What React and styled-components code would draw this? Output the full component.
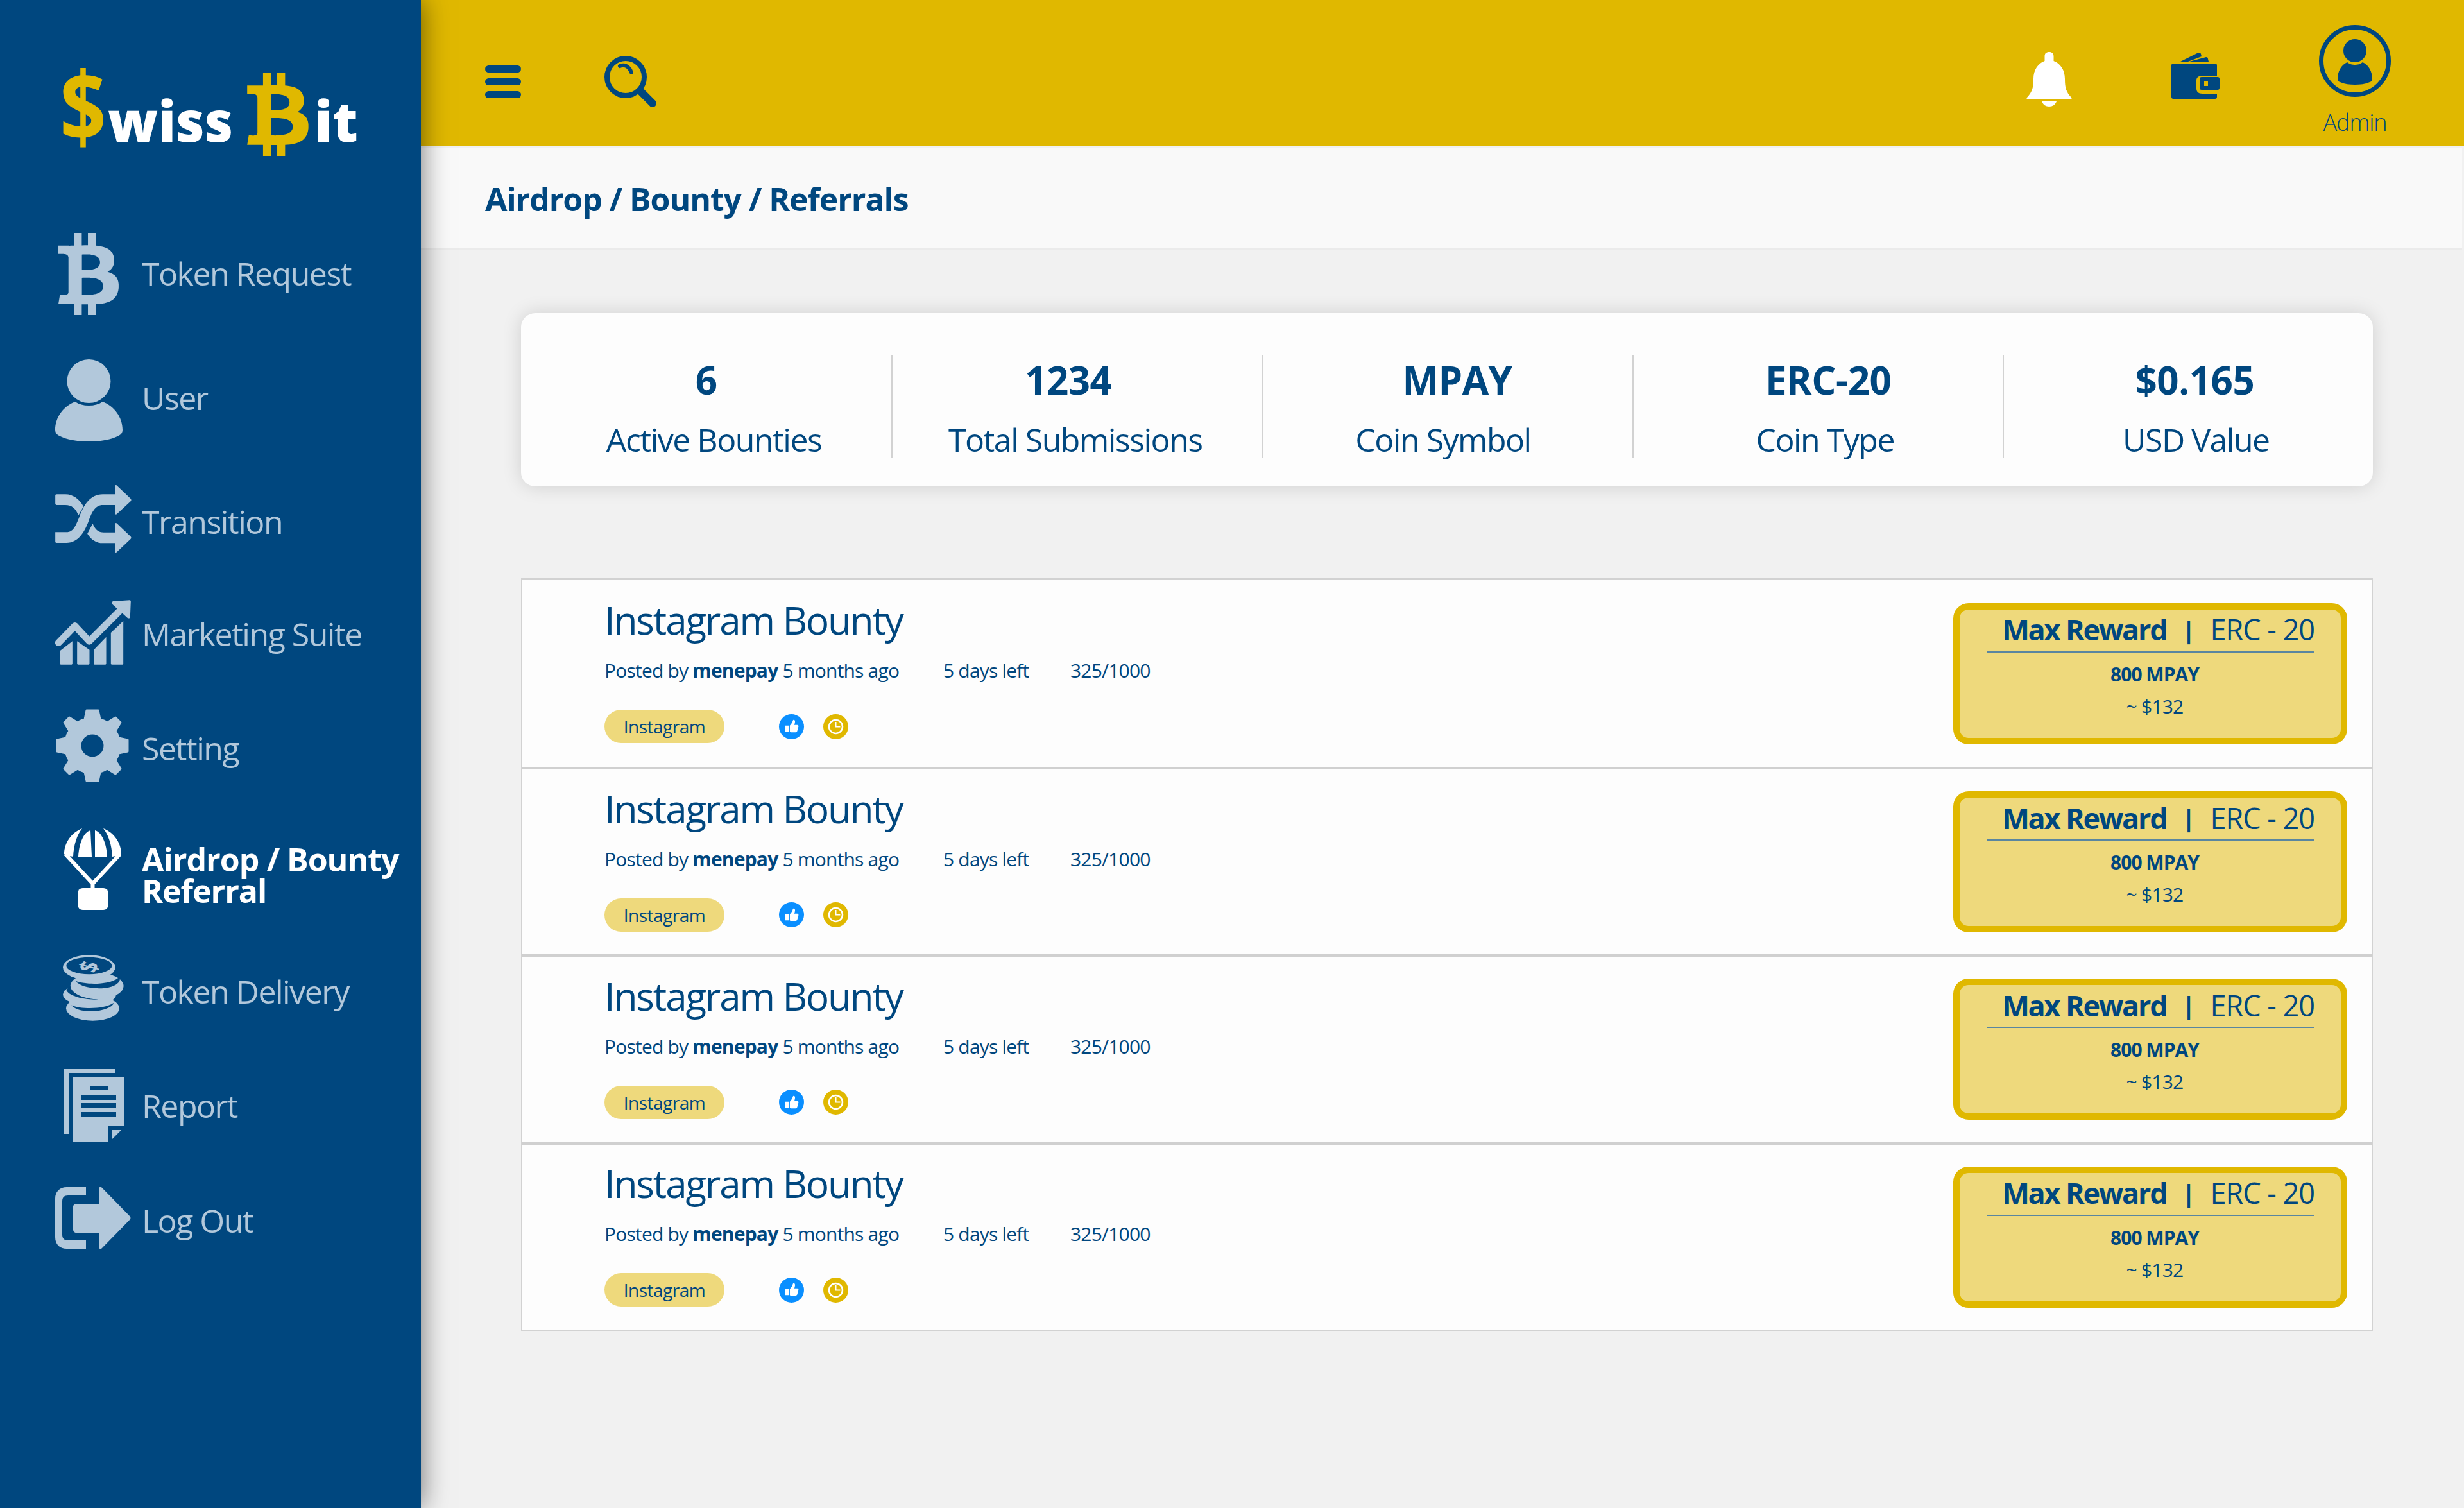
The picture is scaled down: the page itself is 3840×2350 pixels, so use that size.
import React from "react";
import styled, { createGlobalStyle } from "styled-components";
import { FaBtc } from "react-icons/fa";

const NAVY = "#00477f";
const GOLD = "#e0b800";
const PALE_GOLD = "#eed97c";
const MUTED = "#b2c8db";

const STATS = [
    { value: "6", label: "Active Bounties", valueShift: 0, labelShift: 24 },
    { value: "1234", label: "Total Submissions", valueShift: -28, labelShift: -6 },
    { value: "MPAY", label: "Coin Symbol", valueShift: 30, labelShift: -14 },
    { value: "ERC-20", label: "Coin Type", valueShift: 32, labelShift: 22 },
    { value: "$0.165", label: "USD Value", valueShift: 20, labelShift: 24 },
];

const BitcoinIcon = () => <FaBtc size={128} />;

const UserIcon = () => (
    <svg width="105" height="128" viewBox="0 0 105 128" fill="currentColor">
        <circle cx="52.5" cy="34" r="34" />
        <path d="M31 66c6 4 13 6 21.500 6S68 70 74 66c18 7 31 24 31 44 0 4-2 7-6 9-11 6-28 9-46.500 9S17 125 6 119c-4-2-6-5-6-9 0-20 13-37 31-44z" />
    </svg>
);

const ShuffleIcon = () => (
    <svg width="119" height="106" viewBox="78 55 356 318" fill="currentColor">
        <path d="M78 275H130C165 275 175 240 190 205C210 150 240 98 300 98H358V60C358 55 362 53 366 57L430 118C434 122 434 127 430 131L366 190C362 194 358 192 358 187V148H300C265 148 250 180 235 220C215 275 185 325 130 325H85C80 325 78 322 78 318Z" />
        <path d="M85 98H125C160 98 190 120 210 155L186 197C175 165 155 148 125 148H85C80 148 78 145 78 140V105C78 100 80 98 85 98Z" />
        <path d="M228 282L253 235C265 265 280 276 305 276H358V238C358 232 362 230 366 234L430 295C434 299 434 303 430 307L366 368C362 372 358 370 358 364V326H300C270 326 245 310 228 282Z" />
    </svg>
);

const ChartIcon = () => (
    <svg width="118" height="101" viewBox="78 582 353 303" fill="currentColor">
        <path d="M93 782L170 703L237 775L385 627" fill="none" stroke="currentColor" strokeWidth="32" strokeLinecap="round" strokeLinejoin="round" />
        <path d="M348 588L425 583C429 583 431 585 431 589L428 660C428 668 420 670 415 665L345 602C340 596 342 590 348 588Z" />
        <path d="M100 820L158 775V878C158 882 156 884 152 884H106C102 884 100 882 100 878Z" />
        <path d="M180 775L238 815V878C238 882 236 884 232 884H186C182 884 180 882 180 878Z" />
        <path d="M258 815L316 755V878C316 882 314 884 310 884H264C260 884 258 882 258 878Z" />
        <path d="M338 735L396 680V878C396 882 394 884 390 884H344C340 884 338 882 338 878Z" />
    </svg>
);

const GearIcon = () => (
    <svg width="114" height="114" viewBox="0 0 114 114" fill="currentColor">
        <path
            fillRule="evenodd"
            stroke="currentColor"
            strokeWidth="3"
            strokeLinejoin="round"
            d="M48 2h18l3 14c4 1 8 3 11 5l13-8 8 8-8 13c2 3 4 7 5 11l14 3v18l-14 3c-1 4-3 8-5 11l8 13-8 8-13-8c-3 2-7 4-11 5l-3 14H48l-3-14c-4-1-8-3-11-5l-13 8-8-8 8-13c-2-3-4-7-5-11L2 66V48l14-3c1-4 3-8 5-11l-8-13 8-8 13 8c3-2 7-4 11-5zM57 38a19 19 0 1 0 0 38 19 19 0 0 0 0-38z"
        />
    </svg>
);

const ParachuteIcon = () => (
    <svg width="89" height="127" viewBox="0 0 89 127" fill="currentColor">
        <path d="M0 40C0 22 12 6 28 0C20 10 15 25 14 44L2 42Z" />
        <path d="M41 3C30 6 23 24 22 44H43Z" />
        <path d="M48 3C59 6 66 24 67 44H48Z" />
        <path d="M61 0C77 6 89 22 89 40L87 42L75 44C74 25 69 10 61 0Z" />
        <path d="M2 40L44.500 86L87 40M44.500 86V94" fill="none" stroke="currentColor" strokeWidth="6" />
        <rect x="21" y="93" width="48" height="34" rx="8" />
    </svg>
);

const CoinsIcon = () => (
    <svg width="95" height="103" viewBox="55 30 286 308" fill="currentColor">
        <ellipse cx="195" cy="280" rx="125" ry="58" />
        <ellipse cx="180" cy="215" rx="125" ry="52" />
        <ellipse cx="215" cy="175" rx="125" ry="62" />
        <ellipse cx="178" cy="88" rx="123" ry="58" />
        <ellipse cx="178" cy="80" rx="107" ry="40" fill={NAVY} />
        <path d="M115 152C170 172 280 170 320 133C332 155 300 186 225 186C170 186 130 172 115 152Z" fill={NAVY} />
        <path d="M90 175C95 215 160 236 222 238C160 242 90 225 72 197C74 188 80 180 90 175Z" fill={NAVY} />
        <path d="M95 265C140 285 250 285 292 255C296 268 250 294 190 294C140 294 105 280 95 265Z" fill={NAVY} />
        <text
            transform="translate(178 85) scale(1 .7) rotate(-70)"
            y="42"
            fontSize="120"
            fontWeight="700"
            textAnchor="middle"
            fontFamily="Open Sans, sans-serif"
        >$</text>
    </svg>
);

const ReportIcon = () => (
    <svg width="94" height="113" viewBox="0 0 94 113" fill="currentColor">
        <path d="M0 0h80v6H7v95H0z" />
        <path fillRule="evenodd" d="M13 13h81v76H69v24H13zM40 26v7h28v-7zM27 40v8h54v-8zM27 53v8h54v-8zM27 67v7h54v-7z" />
        <path d="M75 95h14L75 109z" />
    </svg>
);

const LogoutIcon = () => (
    <svg width="118" height="96" viewBox="0 0 118 96" fill="currentColor">
        <path d="M48 0v13H20C14 13 11 16 11 22v52c0 6 3 9 9 9h28v13H18C7 96 0 89 0 78V18C0 7 7 0 18 0z" />
        <path d="M68 2c0-2 3-3 5-1l43 44c2 2 2 4 0 6L73 95c-2 2-5 1-5-1V71H33c-3 0-5-2-5-5V31c0-3 2-5 5-5h35z" />
    </svg>
);

const MenuIcon = () => (
    <svg width="56" height="51" viewBox="0 0 56 51" fill={NAVY}>
        <rect width="56" height="11" rx="5.500" />
        <rect y="20" width="56" height="11" rx="5.500" />
        <rect y="40" width="56" height="11" rx="5.500" />
    </svg>
);

const SearchIcon = () => (
    <svg width="81" height="80" viewBox="0 0 81 80" fill="none" stroke={NAVY}>
        <circle cx="33" cy="33" r="29" strokeWidth="8" />
        <path d="M24 16c6-3 14-1 18 10" strokeWidth="6" strokeLinecap="round" />
        <path d="M56 55l19 19" strokeWidth="12" strokeLinecap="round" />
    </svg>
);

const BellIcon = () => (
    <svg width="71" height="85" viewBox="0 0 71 85" fill="#fff">
        <path d="M28.500 7C28.500 2 31 0 35.500 0S42.500 2 42.500 7V14C53 18 60 28 60 42C60 56 62 62 70 71L71 74H0L1 71C9 62 11 56 11 42C11 28 18 18 28.500 14Z" />
        <path d="M24 77H47C45 82 41 85 35.500 85S26 82 24 77Z" />
    </svg>
);

const WalletIcon = () => (
    <svg width="75" height="72" viewBox="0 0 75 72" fill={NAVY}>
        <path d="M14 14L42 0c2-1 3 0 4 2l1 4L26 14zM28 14l26-7c2 0 3 1 3 3l1 4z" />
        <path d="M3 17h65c2 0 3 1 3 3v16H48c-6 0-9 3-9 7v13c0 5 3 8 9 8h23v5c0 2-1 3-3 3H3c-2 0-3-1-3-3V20c0-2 1-3 3-3z" />
        <path fillRule="evenodd" d="M47 38h25c2 0 3 1 3 3v14c0 2-1 3-3 3H47c-2 0-3-1-3-3V41c0-2 1-3 3-3zM51 45v7h6v-7z" />
    </svg>
);

const AvatarIcon = () => (
    <svg width="112" height="112" viewBox="0 0 112 112" fill={NAVY}>
        <circle cx="56" cy="56" r="52.500" fill="none" stroke={NAVY} strokeWidth="7" />
        <ellipse cx="56" cy="40" rx="18" ry="18" />
        <path d="M44 58c4 3 8 4 12 4s8-1 12-4c9 4 15 14 15 26 0 3-1 4-4 5-7 3-15 4-23 4s-16-1-23-4c-3-1-4-2-4-5 0-12 6-22 15-26z" />
    </svg>
);

const ThumbIcon = () => (
    <svg width="22" height="22" viewBox="0 0 25 25" fill="#fff">
        <path d="M1 11h6v11H1zM3 18.500h2v1.500H3z" />
        <path d="M9 11l4-5c1-2 1-4 2-5 2-1 4 1 3 5l-1 4h5c2 0 3 2 2 4l-2 7c-1 1-2 2-3 2H11c-1 0-2-1-2-1z" />
    </svg>
);

const ClockIcon = () => (
    <svg width="31" height="31" viewBox="0 0 31 31" fill="none" stroke="#fff">
        <circle cx="15.500" cy="15.500" r="10.500" strokeWidth="2.500" />
        <path d="M15.500 8v7.500h7" strokeWidth="2" />
    </svg>
);

const NAV = [
    { label: "Token Request", icon: <BitcoinIcon />, x: -12, dy: 1, gap: 0 },
    { label: "User", icon: <UserIcon />, x: 0, dy: 4, gap: 74 },
    { label: "Transition", icon: <ShuffleIcon />, x: 0, dy: -4, gap: 73 },
    { label: "Marketing Suite", icon: <ChartIcon />, x: 0, dy: -3, gap: 55 },
    { label: "Setting", icon: <GearIcon />, x: 1, dy: -4, gap: 58 },
    { label: "Airdrop / Bounty Referral", icon: <ParachuteIcon />, x: 14, dy: -10, gap: 78, active: true },
    { label: "Token Delivery", icon: <CoinsIcon />, x: 12, dy: -6, gap: 61 },
    { label: "Report", icon: <ReportIcon />, x: 14, dy: -1, gap: 58 },
    { label: "Log Out", icon: <LogoutIcon />, x: 0, dy: -4, gap: 59 },
];

const Bounty = () => (
    <BountyRow>
        <BountyInfo>
            <BountyTitle>Instagram Bounty</BountyTitle>
            <MetaLine>
                <PostedBy>Posted by <strong>menepay</strong> 5 months ago</PostedBy>
                <DaysLeft>5 days left</DaysLeft>
                <span>325/1000</span>
            </MetaLine>
            <TagLine>
                <Tag>Instagram</Tag>
                <RoundBadge $color="#0a8fff" $first><ThumbIcon /></RoundBadge>
                <RoundBadge $color={GOLD}><ClockIcon /></RoundBadge>
            </TagLine>
        </BountyInfo>
        <RewardBox>
            <RewardHead>
                <strong>Max Reward</strong>
                <RewardBar>|</RewardBar>
                <span>ERC - 20</span>
            </RewardHead>
            <RewardAmount>800 MPAY</RewardAmount>
            <RewardUsd>~ $132</RewardUsd>
        </RewardBox>
    </BountyRow>
);

const App = () => {
    return (
        <Page>
            <GlobalStyle />
            <Sidebar>
                <Logo>
                    <Dollar>$</Dollar>wiss
                    <LogoCoin><FaBtc size={130} /></LogoCoin>it
                </Logo>
                <NavList>
                    {NAV.map((item) => (
                        <NavItem key={item.label} $gap={item.gap} $active={item.active}>
                            <NavIcon $x={item.x} $dy={item.dy}>{item.icon}</NavIcon>
                            <NavLabel $active={item.active}>{item.label}</NavLabel>
                        </NavItem>
                    ))}
                </NavList>
            </Sidebar>
            <Main>
                <TopBar>
                    <TopLeft>
                        <MenuIcon />
                        <SearchIcon />
                    </TopLeft>
                    <TopRight>
                        <TopIcon $dy={18}><BellIcon /></TopIcon>
                        <TopIcon $dy={8}><WalletIcon /></TopIcon>
                        <Profile>
                            <AvatarIcon />
                            <ProfileName>Admin</ProfileName>
                        </Profile>
                    </TopRight>
                </TopBar>
                <Crumbs>Airdrop / Bounty / Referrals</Crumbs>
                <Content>
                    <StatsCard>
                        {STATS.map((stat) => (
                            <Stat key={stat.label}>
                                <StatValue $shift={stat.valueShift}>{stat.value}</StatValue>
                                <StatLabel $shift={stat.labelShift}>{stat.label}</StatLabel>
                            </Stat>
                        ))}
                    </StatsCard>
                    <BountyList>
                        <Bounty />
                        <Bounty />
                        <Bounty />
                        <Bounty />
                    </BountyList>
                </Content>
            </Main>
        </Page>
    );
};

export default App;


const GlobalStyle = createGlobalStyle`
body {
    margin: 0;
    background: #f1f1f1;
    font-family: "Open Sans", "Noto Sans", sans-serif;
    color: ${NAVY};
}
`

const Page = styled.div`
display: flex;
width: 3840px;
height: 2350px;
overflow: hidden;
`

const Sidebar = styled.aside`
flex: 0 0 656px;
position: relative;
z-index: 2;
background: ${NAVY};
box-shadow: 0 0 40px rgba(0, 0, 0, 0.55);
`

const Logo = styled.div`
display: flex;
align-items: baseline;
height: 366px;
padding: 98px 0 0 93px;
box-sizing: border-box;
color: #fff;
font-size: 86px;
font-weight: 800;
line-height: 130px;
`

const Dollar = styled.span`
color: ${GOLD};
font-size: 150px;
font-weight: 700;
display: inline-block;
width: 75px;
transform: scaleX(0.85);
transform-origin: left center;
`

const LogoCoin = styled.span`
color: ${GOLD};
align-self: flex-start;
margin: 15px -8px 0 5px;
height: 130px;
`

const NavList = styled.nav`
display: flex;
flex-direction: column;
`

const NavItem = styled.a`
display: flex;
align-items: center;
height: 120px;
margin-top: ${(p) => p.$gap}px;
padding-left: 86px;
color: ${(p) => (p.$active ? "#fff" : MUTED)};
`

const NavIcon = styled.div`
display: flex;
align-items: center;
flex: 0 0 135px;
padding-left: ${(p) => Math.max(p.$x, 0)}px;
margin-left: ${(p) => Math.min(p.$x, 0)}px;
margin-right: ${(p) => -Math.min(p.$x, 0)}px;
box-sizing: border-box;
margin-top: ${(p) => p.$dy * 2}px;
`

const NavLabel = styled.span`
font-size: 50px;
font-weight: ${(p) => (p.$active ? 700 : 400)};
line-height: ${(p) => (p.$active ? "49px" : "60px")};
letter-spacing: ${(p) => (p.$active ? "-1px" : "-1.5px")};
`

const Main = styled.main`
flex: 1;
display: flex;
flex-direction: column;
min-width: 0;
`

const TopBar = styled.header`
display: flex;
align-items: center;
justify-content: space-between;
height: 228px;
background: ${GOLD};
flex-shrink: 0;
`

const TopLeft = styled.div`
display: flex;
align-items: center;
gap: 130px;
padding: 26px 0 0 100px;
`

const TopRight = styled.div`
display: flex;
align-items: center;
gap: 155px;
padding-right: 114px;
`

const TopIcon = styled.div`
display: flex;
margin-top: ${(p) => p.$dy}px;
`

const Profile = styled.div`
display: flex;
flex-direction: column;
align-items: center;
margin-top: 26px;
`

const ProfileName = styled.span`
font-size: 36px;
font-weight: 300;
line-height: 50px;
margin-top: 15px;
letter-spacing: -1px;
`

const Crumbs = styled.div`
height: 156px;
margin: 2px 3px 0 0;
padding-left: 100px;
background: #f9f9f9;
border-bottom: 3px solid #ebebeb;
font-size: 50px;
font-weight: 700;
line-height: 160px;
letter-spacing: -1.1px;
flex-shrink: 0;
`

const Content = styled.div`
padding: 99px 142px 0 156px;
`

const StatsCard = styled.section`
display: grid;
grid-template-columns: repeat(5, 1fr);
height: 270px;
padding: 65px 0 45px;
box-sizing: border-box;
background: #fdfdfd;
border-radius: 22px;
box-shadow: 0 0 30px rgba(0, 0, 0, 0.14);
`

const Stat = styled.div`
display: flex;
flex-direction: column;
align-items: center;
height: 160px;
border-left: 2px solid #d2d2d2;
&:first-child {
    border-left: none;
}
`

const StatValue = styled.div`
font-size: 60px;
font-weight: 700;
line-height: 78px;
margin-left: ${(p) => p.$shift}px;
letter-spacing: -0.5px;
`

const StatLabel = styled.div`
font-size: 50px;
line-height: 60px;
margin-top: 24px;
margin-left: ${(p) => p.$shift}px;
letter-spacing: -1.5px;
white-space: nowrap;
`

const BountyList = styled.section`
margin-top: 143px;
background: #fdfdfd;
border: 2px solid #d2d2d2;
border-top-width: 3px;
`

const BountyRow = styled.article`
display: flex;
justify-content: space-between;
align-items: center;
height: 288.33px;
padding: 0 38px 0 128px;
border-top: 4px solid #d0d0d0;
&:first-child {
    border-top: none;
    height: 291px;
}
`

const BountyInfo = styled.div`
display: flex;
flex-direction: column;
margin-bottom: 15px;
`

const BountyTitle = styled.h3`
margin: 0;
font-size: 60px;
font-weight: 400;
line-height: 80px;
letter-spacing: -2.1px;
`

const MetaLine = styled.div`
display: flex;
margin-top: 19px;
font-size: 30px;
line-height: 40px;
letter-spacing: -0.8px;
`

const PostedBy = styled.span`
width: 528px;
strong {
    font-weight: 700;
}
`

const DaysLeft = styled.span`
width: 198px;
`

const TagLine = styled.div`
display: flex;
align-items: center;
margin-top: 41px;
`

const Tag = styled.span`
display: flex;
align-items: center;
justify-content: center;
width: 187px;
height: 52px;
border-radius: 26px;
background: ${PALE_GOLD};
font-size: 28px;
letter-spacing: -0.5px;
`

const RoundBadge = styled.span`
display: flex;
align-items: center;
justify-content: center;
width: 39px;
height: 39px;
border-radius: 50%;
background: ${(p) => p.$color};
margin-left: ${(p) => (p.$first ? 85 : 30)}px;
`

const RewardBox = styled.aside`
width: 614px;
height: 220px;
box-sizing: border-box;
border: 10px solid ${GOLD};
border-radius: 24px;
background: ${PALE_GOLD};
display: flex;
flex-direction: column;
align-items: center;
`

const RewardHead = styled.div`
display: flex;
justify-content: flex-end;
align-items: center;
align-self: stretch;
height: 62px;
padding-bottom: 3px;
margin: 0 41px 0 43px;
border-bottom: 2px solid #5a86a0;
font-size: 45px;
letter-spacing: -1px;
strong {
    font-weight: 700;
    letter-spacing: -2.2px;
}
`

const RewardBar = styled.span`
margin: 0 24px;
font-size: 38px;
font-weight: 700;
`

const RewardAmount = styled.div`
margin: 14px 0 0 14px;
font-size: 30px;
font-weight: 700;
line-height: 40px;
letter-spacing: -1px;
`

const RewardUsd = styled.div`
margin: 10px 0 0 14px;
font-size: 30px;
line-height: 40px;
letter-spacing: -0.8px;
`
